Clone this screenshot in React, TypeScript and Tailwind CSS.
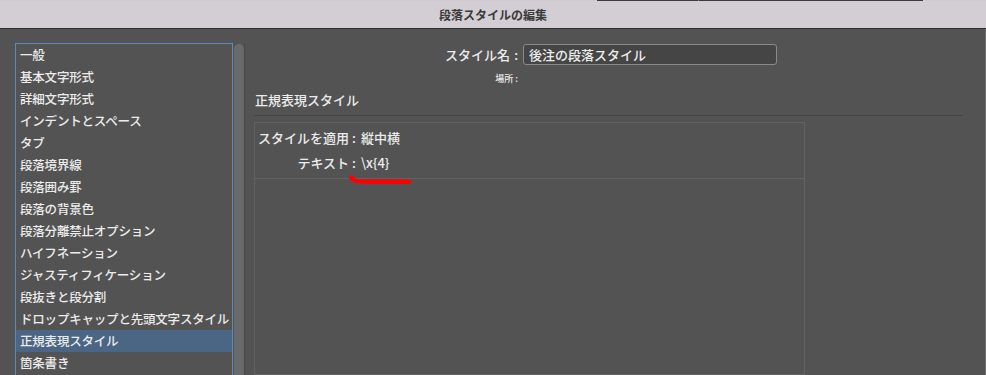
import React from 'react';

const items = [
  '一般',
  '基本文字形式',
  '詳細文字形式',
  'インデントとスペース',
  'タブ',
  '段落境界線',
  '段落囲み罫',
  '段落の背景色',
  '段落分離禁止オプション',
  'ハイフネーション',
  'ジャスティフィケーション',
  '段抜きと段分割',
  'ドロップキャップと先頭文字スタイル',
  '正規表現スタイル',
  '箇条書き',
];

const selected = '正規表現スタイル';

export default function App() {
  return (
    <div className="relative w-[986px] h-[375px] overflow-hidden bg-[#d3ced4] font-['Noto_Sans_CJK_JP','Noto_Sans',sans-serif]">
      {/* strip of whatever sits behind the dialog */}
      <div className="flex h-px">
        <div className="w-[597px] bg-[#cfcbd0]" />
        <div className="w-[101px] bg-[#3a3a3a]" />
        <div className="w-px bg-[#777]" />
        <div className="w-[224px] bg-[#3a3a3a]" />
        <div className="flex-1 bg-[#cfcbd0]" />
      </div>

      {/* title bar */}
      <div className="h-[28px] rounded-t-[9px] bg-[#d3ced4] border-b border-[#2f2f2f] flex items-center justify-center">
        <span className="text-[12px] font-bold text-[#3a3a3a] leading-none">段落スタイルの編集</span>
      </div>

      {/* body */}
      <div className="flex h-[346px] bg-[#535353] border-r border-[#707070]">
        {/* category list */}
        <div className="flex pl-[15px] pt-[14px]">
          <div className="w-[218px] h-[400px] border border-[#5b8ac0] flex flex-col">
            {items.map((item) => (
              <div
                key={item}
                className={`h-[22px] shrink-0 flex items-center pl-[4px] whitespace-nowrap tracking-[-0.2px] text-[12.5px] font-medium text-[#ececec] ${
                  item === selected ? 'bg-[#4b6585]' : ''
                }`}
              >
                {item}
              </div>
            ))}
          </div>
          <div className="ml-px w-[11px] pt-px border-r border-[#474747]">
            <div className="w-[10px] h-[340px] rounded-full bg-[#6a6a6a]" />
          </div>
        </div>

        {/* settings panel */}
        <div className="ml-[9px] flex-1 flex flex-col text-[#ececec]">
          <div className="flex items-center pt-[15px]">
            <div className="w-[264px] text-right text-[13px] font-medium leading-none">
              スタイル名<span className="ml-[4px]">:</span>
            </div>
            <div className="ml-[5px] w-[254px] h-[21px] rounded-[3px] border border-[#8a8a8a] bg-[#454545] flex items-center pl-[5px] text-[13px] font-medium">
              後注の段落スタイル
            </div>
          </div>

          <div className="mt-[8px] w-[264px] text-right text-[9px] font-medium leading-[12px]">場所 :</div>

          <div className="mt-[6px] pl-px text-[13px] font-medium leading-[18px]">正規表現スタイル</div>

          <div className="mt-[6px] h-px w-[709px] bg-[#454545]" />

          <div className="mt-[6px] w-[551px] h-[300px] border border-[#626262]">
            <div className="pl-[3px] pt-[6px] pb-[6px] border-b border-[#626262] grid grid-cols-[91px_auto] gap-y-[7px] text-[13px] font-medium leading-[18px]">
              <span className="text-right">スタイルを適用</span>
              <span>
                <span className="ml-[3px] mr-[5px]">:</span>縦中横
              </span>
              <span className="text-right">テキスト</span>
              <span>
                <span className="ml-[3px] mr-[5px]">:</span>\x{'{4}'}
              </span>
            </div>
          </div>
        </div>
      </div>

      {/* red hand-drawn annotation */}
      <svg className="absolute left-0 top-0 pointer-events-none" width="986" height="375">
        <path
          d="M351 177.5 Q354 181.5 362 181.5 L409 181.8"
          stroke="#ff0000"
          strokeWidth="4.5"
          strokeLinecap="round"
          fill="none"
        />
      </svg>
    </div>
  );
}
